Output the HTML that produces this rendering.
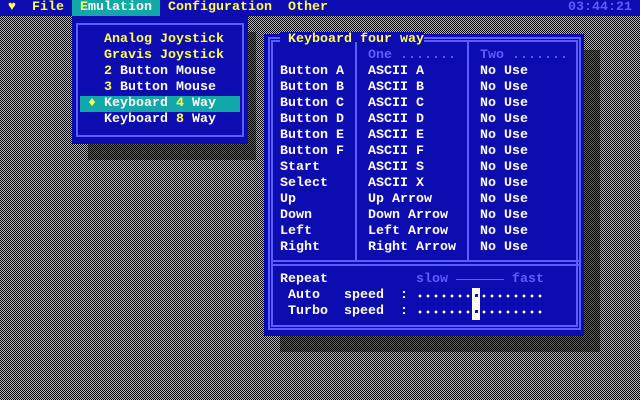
<!DOCTYPE html>
<html><head><meta charset="utf-8"><style>
*{margin:0;padding:0;box-sizing:border-box}
body{width:640px;height:400px;overflow:hidden;position:relative;
background-color:#000;
background-image:linear-gradient(45deg,#b8b8a8 25%,transparent 25%,transparent 75%,#b8b8a8 75%),linear-gradient(45deg,#b8b8a8 25%,transparent 25%,transparent 75%,#b8b8a8 75%);
background-size:2px 2px;background-position:0 0,1px 1px;
font-family:"Liberation Mono",monospace;font-weight:bold;font-size:13.33px;line-height:16px;color:#fff}
.t{position:absolute;white-space:pre;height:16px}
.y{color:#ffff55}.lb{color:#5c5cff}
.b{position:absolute;background:#0c0cb0}
.sh{position:absolute;background-color:#000;
background-image:linear-gradient(45deg,#606058 25%,transparent 25%,transparent 75%,#606058 75%),linear-gradient(45deg,#606058 25%,transparent 25%,transparent 75%,#606058 75%);
background-size:2px 2px;background-position:0 0,1px 1px}
.ln{position:absolute;background:#5c5cff}
.dots{position:absolute;height:16px;width:128px;
background-image:radial-gradient(circle,#fff 1.3px,transparent 1.5px);background-size:8px 16px}
</style></head><body>
<div class="b" style="left:0;top:0;width:640px;height:16px"></div>
<div class="t y" style="left:8px;top:0">♥</div>
<div class="t y" style="left:32px;top:0">File</div>
<div style="position:absolute;left:72px;top:0;width:88px;height:16px;background:#10a8a8"></div>
<div class="t" style="left:80px;top:0"><span class="y">E</span>mulation</div>
<div class="t y" style="left:168px;top:0">Configuration</div>
<div class="t y" style="left:288px;top:0">Other</div>
<div class="t lb" style="left:568px;top:0">03:44:21</div>

<!-- dropdown -->
<div class="sh" style="left:248px;top:32px;width:8px;height:128px"></div>
<div class="sh" style="left:88px;top:144px;width:168px;height:16px"></div>
<div class="b" style="left:72px;top:16px;width:176px;height:128px"></div>
<div style="position:absolute;left:76px;top:23px;width:168px;height:114px;border:2px solid #5c5cff"></div>
<div style="position:absolute;left:80px;top:96px;width:160px;height:16px;background:#10a8a8"></div>
<div class="t y" style="left:104px;top:32px">Analog Joystick</div>
<div class="t y" style="left:104px;top:48px">Gravis Joystick</div>
<div class="t" style="left:104px;top:64px"><span class="y">2</span> Button Mouse</div>
<div class="t" style="left:104px;top:80px"><span class="y">3</span> Button Mouse</div>
<div class="t y" style="left:88px;top:96px">♦</div>
<div class="t" style="left:104px;top:96px">Keyboard <span class="y">4</span> Way</div>
<div class="t" style="left:104px;top:112px">Keyboard <span class="y">8</span> Way</div>

<!-- dialog -->
<div class="sh" style="left:584px;top:50px;width:16px;height:302px"></div>
<div class="sh" style="left:280px;top:336px;width:320px;height:16px"></div>
<div class="b" style="left:264px;top:34px;width:320px;height:302px"></div>
<div style="position:absolute;left:268px;top:37px;width:313px;height:293px;border:2px solid #5c5cff"></div>
<div style="position:absolute;left:271px;top:40px;width:307px;height:287px;border:2px solid #5c5cff"></div>
<div class="b" style="left:280px;top:32px;width:144px;height:16px"></div>
<div class="t y" style="left:288px;top:32px">Keyboard four way</div>
<div class="ln" style="left:355px;top:42px;width:2px;height:220px"></div>
<div class="ln" style="left:467px;top:42px;width:2px;height:220px"></div>
<div class="ln" style="left:271px;top:260px;width:309px;height:2px"></div>
<div class="ln" style="left:271px;top:264px;width:309px;height:2px"></div>
<div class="t lb" style="left:368px;top:48px">One .......</div>
<div class="t lb" style="left:480px;top:48px">Two .......</div>
<div class="t" style="left:280px;top:64px">Button A
Button B
Button C
Button D
Button E
Button F
Start
Select
Up
Down
Left
Right</div>
<div class="t" style="left:368px;top:64px">ASCII A
ASCII B
ASCII C
ASCII D
ASCII E
ASCII F
ASCII S
ASCII X
Up Arrow
Down Arrow
Left Arrow
Right Arrow</div>
<div class="t" style="left:480px;top:64px">No Use
No Use
No Use
No Use
No Use
No Use
No Use
No Use
No Use
No Use
No Use
No Use</div>
<div class="t" style="left:280px;top:272px">Repeat</div>
<div class="t lb" style="left:416px;top:272px">slow</div>
<div class="ln" style="left:456px;top:279px;width:48px;height:1px"></div>
<div class="t lb" style="left:512px;top:272px">fast</div>
<div class="t" style="left:288px;top:288px">Auto   speed  :</div>
<div class="t" style="left:288px;top:304px">Turbo  speed  :</div>
<div style="position:absolute;left:472px;top:288px;width:8px;height:32px;background:#fff"></div>
<div class="dots" style="left:416px;top:288px"></div>
<div class="dots" style="left:416px;top:304px"></div>
<div style="position:absolute;left:475px;top:294px;width:3px;height:3px;background:#0c0cb0"></div>
<div style="position:absolute;left:475px;top:310px;width:3px;height:3px;background:#0c0cb0"></div>
</body></html>
